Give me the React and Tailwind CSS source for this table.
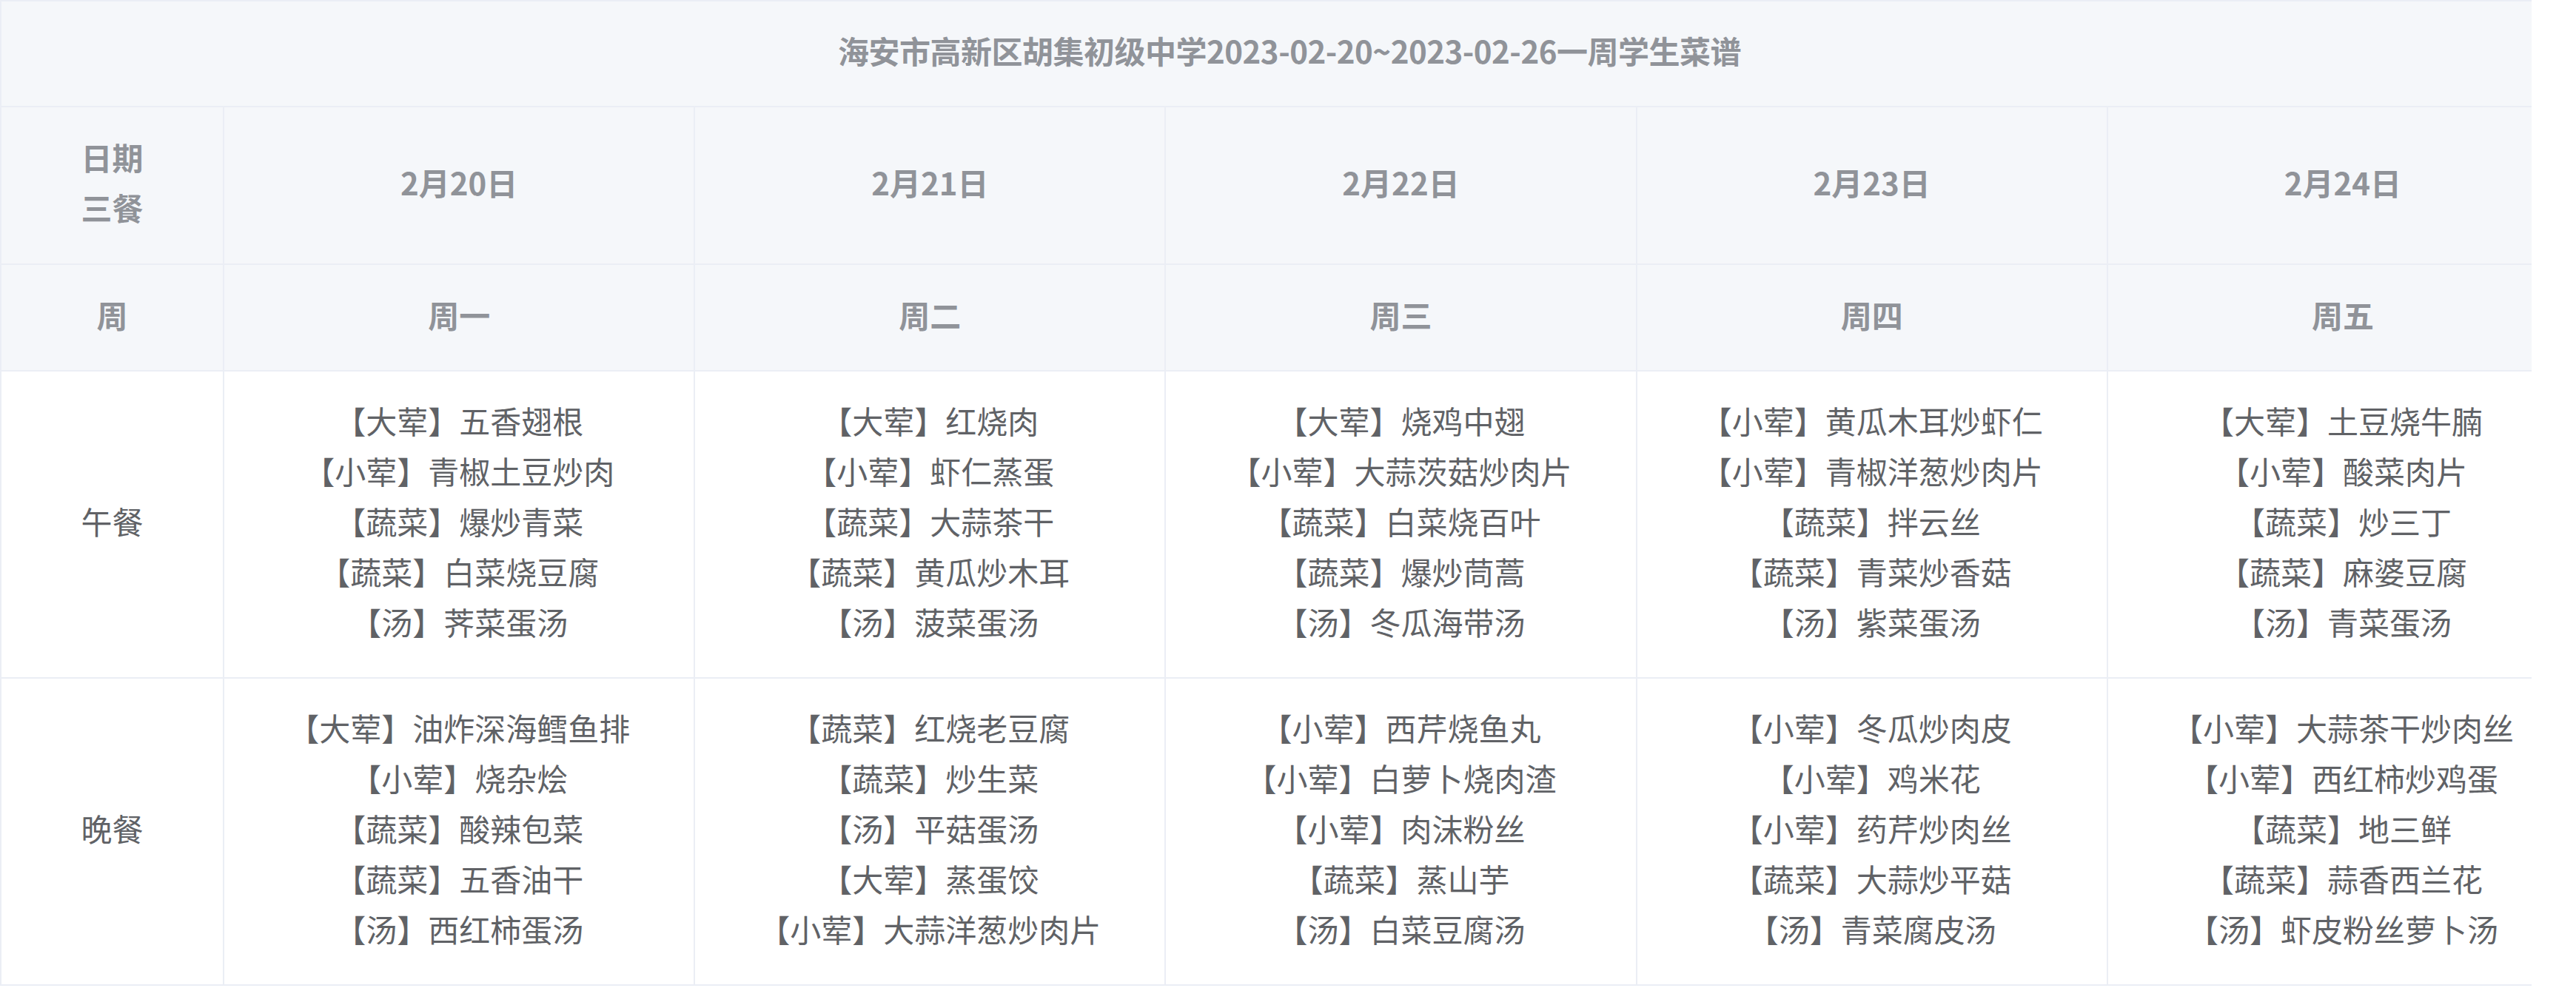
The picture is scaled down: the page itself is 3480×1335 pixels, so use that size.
import React from "react";

const days = [
  { date: "2月20日", week: "周一" },
  { date: "2月21日", week: "周二" },
  { date: "2月22日", week: "周三" },
  { date: "2月23日", week: "周四" },
  { date: "2月24日", week: "周五" },
];

const lunch = [
  ["【大荤】五香翅根", "【小荤】青椒土豆炒肉", "【蔬菜】爆炒青菜", "【蔬菜】白菜烧豆腐", "【汤】荠菜蛋汤"],
  ["【大荤】红烧肉", "【小荤】虾仁蒸蛋", "【蔬菜】大蒜茶干", "【蔬菜】黄瓜炒木耳", "【汤】菠菜蛋汤"],
  ["【大荤】烧鸡中翅", "【小荤】大蒜茨菇炒肉片", "【蔬菜】白菜烧百叶", "【蔬菜】爆炒茼蒿", "【汤】冬瓜海带汤"],
  ["【小荤】黄瓜木耳炒虾仁", "【小荤】青椒洋葱炒肉片", "【蔬菜】拌云丝", "【蔬菜】青菜炒香菇", "【汤】紫菜蛋汤"],
  ["【大荤】土豆烧牛腩", "【小荤】酸菜肉片", "【蔬菜】炒三丁", "【蔬菜】麻婆豆腐", "【汤】青菜蛋汤"],
];

const dinner = [
  ["【大荤】油炸深海鳕鱼排", "【小荤】烧杂烩", "【蔬菜】酸辣包菜", "【蔬菜】五香油干", "【汤】西红柿蛋汤"],
  ["【蔬菜】红烧老豆腐", "【蔬菜】炒生菜", "【汤】平菇蛋汤", "【大荤】蒸蛋饺", "【小荤】大蒜洋葱炒肉片"],
  ["【小荤】西芹烧鱼丸", "【小荤】白萝卜烧肉渣", "【小荤】肉沫粉丝", "【蔬菜】蒸山芋", "【汤】白菜豆腐汤"],
  ["【小荤】冬瓜炒肉皮", "【小荤】鸡米花", "【小荤】药芹炒肉丝", "【蔬菜】大蒜炒平菇", "【汤】青菜腐皮汤"],
  ["【小荤】大蒜茶干炒肉丝", "【小荤】西红柿炒鸡蛋", "【蔬菜】地三鲜", "【蔬菜】蒜香西兰花", "【汤】虾皮粉丝萝卜汤"],
];

const cell = "border-r-2 border-b-2 border-[#ebeef5] text-center align-middle pb-[9px]";
const head = `${cell} bg-[#f5f7fa] text-[#909399] font-bold`;
const body = `${cell} bg-white text-[#606266]`;

function MealRow({ label, items }) {
  return (
    <tr className="h-[415px]">
      <td className={body}>{label}</td>
      {items.map((list, i) => (
        <td key={i} className={body}>
          {list.map((d) => (
            <div key={d}>{d}</div>
          ))}
        </td>
      ))}
    </tr>
  );
}

export default function App() {
  return (
    <div className="w-[3480px] h-[1335px] bg-white font-['Noto_Sans_CJK_SC','Noto_Sans',sans-serif] text-[42px] leading-[68px]">
      <div className="w-[3420px] overflow-hidden border-l-2 border-t-2 border-[#ebeef5]">
        <table className="w-[3482px] table-fixed border-collapse">
          <colgroup>
            <col className="w-[300px]" />
            <col className="w-[636px]" />
            <col className="w-[636px]" />
            <col className="w-[636px]" />
            <col className="w-[636px]" />
            <col className="w-[636px]" />
          </colgroup>
          <tbody>
            <tr className="h-[142px]">
              <td colSpan={6} className={`${head} tracking-[-0.5px]`}>
                海安市高新区胡集初级中学2023-02-20~2023-02-26一周学生菜谱
              </td>
            </tr>
            <tr className="h-[213px]">
              <td className={head}>
                <div>日期</div>
                <div>三餐</div>
              </td>
              {days.map((d) => (
                <td key={d.date} className={head}>
                  {d.date}
                </td>
              ))}
            </tr>
            <tr className="h-[144px]">
              <td className={head}>周</td>
              {days.map((d) => (
                <td key={d.week} className={head}>
                  {d.week}
                </td>
              ))}
            </tr>
            <MealRow label="午餐" items={lunch} />
            <MealRow label="晚餐" items={dinner} />
          </tbody>
        </table>
      </div>
    </div>
  );
}
